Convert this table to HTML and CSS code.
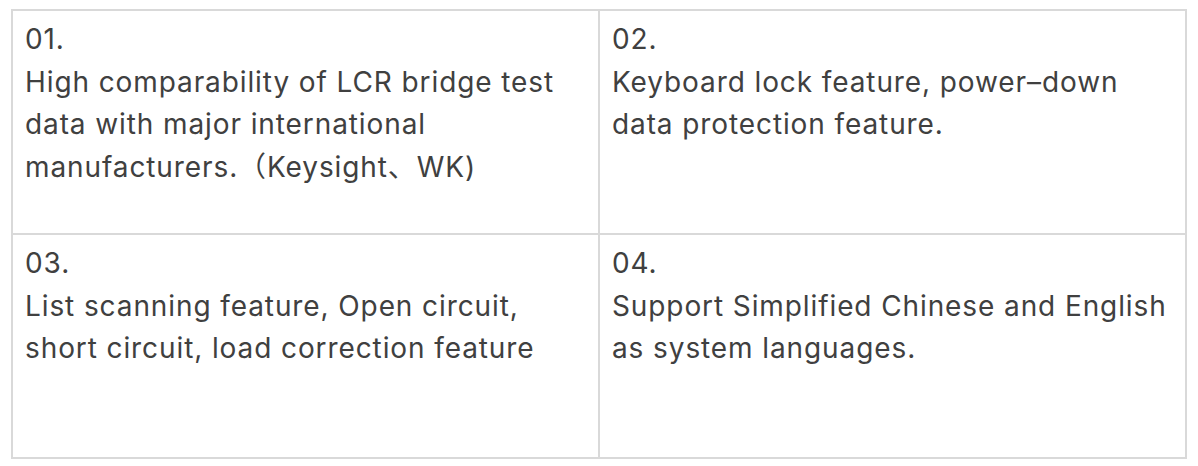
FILE: index.html
```html
<!DOCTYPE html>
<html>
<head>
<meta charset="utf-8">
<link rel="stylesheet" href="styles.css">
</head>
<body>
<div class="features">
  <div class="cell">
    <p class="num">01.</p>
    <p class="text">High comparability of LCR bridge test data with major international manufacturers.（Keysight、WK)</p>
  </div>
  <div class="cell">
    <p class="num">02.</p>
    <p class="text">Keyboard lock feature, power–down data protection feature.</p>
  </div>
  <div class="cell">
    <p class="num">03.</p>
    <p class="text">List scanning feature, Open circuit, short circuit, load correction feature</p>
  </div>
  <div class="cell">
    <p class="num">04.</p>
    <p class="text">Support Simplified Chinese and English as system languages.</p>
  </div>
</div>
</body>
</html>
```
FILE: styles.css
```css
html, body {
  margin: 0;
  padding: 0;
  background: #ffffff;
}
body {
  padding: 9px 0 0 11px;
  font-family: Inter, "Noto Sans CJK SC", sans-serif;
  color: #404040;
}
.features {
  width: 1176px;
  display: grid;
  grid-template-columns: 1fr 1fr;
  grid-auto-rows: 224px;
  border-top: 2px solid #d9d9d9;
  border-left: 2px solid #d9d9d9;
  box-sizing: border-box;
}
.cell {
  border-right: 2px solid #d9d9d9;
  border-bottom: 2px solid #d9d9d9;
  padding: 7px 12px 0 12px;
  box-sizing: border-box;
}
.num, .text {
  margin: 0;
  font-size: 28px;
  line-height: 42.5px;
  letter-spacing: 0.9px;
}
```
